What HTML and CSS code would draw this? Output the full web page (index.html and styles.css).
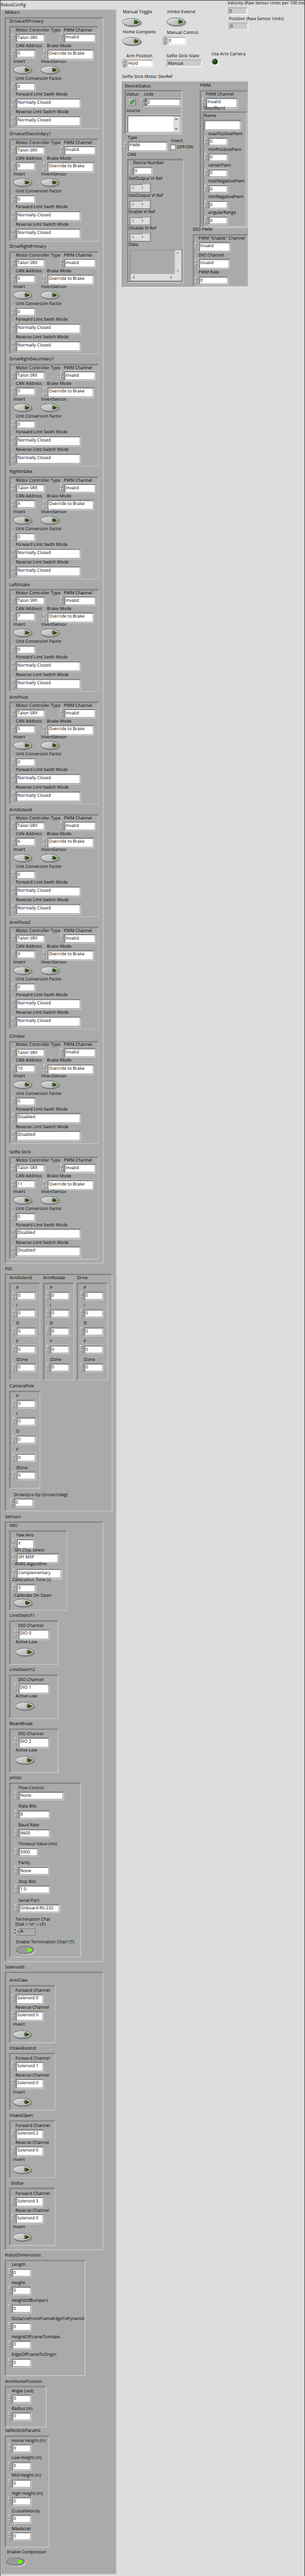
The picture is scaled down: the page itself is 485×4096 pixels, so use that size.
FILE: index.html
```
<!DOCTYPE html>
<html lang="en">
<head>
<meta charset="utf-8">
<title>RobotConfig</title>
<link rel="stylesheet" href="styles.css">
</head>
<body>
<svg class="defs" aria-hidden="true">
  <defs>
    <linearGradient id="metal" x1="0" y1="0" x2="1" y2="1"><stop offset="0" stop-color="#f0f0f0"/><stop offset=".4" stop-color="#c4c4c4"/><stop offset="1" stop-color="#8c8c8c"/></linearGradient>
    <linearGradient id="face" x1="0" y1="0" x2="1" y2="1"><stop offset="0" stop-color="#e8e8e8"/><stop offset=".4" stop-color="#cacaca"/><stop offset="1" stop-color="#b0b0b0"/></linearGradient>
    <linearGradient id="dim" x1="0" y1="0" x2="1" y2="1"><stop offset="0" stop-color="#2f7a30"/><stop offset=".5" stop-color="#33611f"/><stop offset=".6" stop-color="#3d3500"/><stop offset="1" stop-color="#3d3500"/></linearGradient>
    <radialGradient id="lamp" cx=".35" cy=".35" r=".7"><stop offset="0" stop-color="#5c8c50"/><stop offset=".4" stop-color="#1f4a10"/><stop offset="1" stop-color="#1c2600"/></radialGradient>
  </defs>
</svg>
<main class="window"><div class="sheet" id="sheet"></div></main>
<script src="script.js"></script>
</body>
</html>
```
FILE: styles.css
```
* { box-sizing: border-box; }
body { margin: 0; background: #ddd; }
.defs { display: block; width: 0; height: 0; }
.window { width: 485px; height: 4096px; overflow: hidden; }
.sheet {
  --hi: #fff; --lo: #ccc; --deep: #aaa; --rim: #ddd;
  width: 813px; height: 6864px;
  transform: scale(.59656, .59674); transform-origin: 0 0;
  display: grid; grid-template-columns: 310px 1fr;
  background: #ddd; border: 1px solid #000; border-bottom-width: 0;
  font: 11.55px/18px "Open Sans", "Noto Sans", sans-serif;
  text-rendering: geometricPrecision;
  color: #000; white-space: nowrap;
}
.title { height: 23.5px; padding: 3.5px 0 0 1px; }
.panel {
  height: 6835.5px; padding-left: 11px; background: #aaa;
  box-shadow: inset 1.5px 1.5px #ccc, inset -2px -2px #ccc, 1px 1px #fff;
}
.panel, .dark { --hi: #ccc; --lo: #999; --deep: #777; --rim: #aaa; }

.stack { display: flex; flex-direction: column; align-items: flex-start; }
.row { display: flex; align-items: flex-start; }
.stack > *, .row > * { flex-shrink: 0; }
.caption { height: 20px; padding-left: 1.3px; }
.frame {
  background: #aaa;
  box-shadow: inset 2px 2px var(--lo), inset -2px -2px var(--hi), inset 4px 4px var(--deep);
}
.devref { box-shadow: inset 1.5px 1.5px #ccc, inset -2px -2px #fff, inset 3.5px 3.5px #999; }

.label { height: 18px; padding-left: 12px; }
.entry { display: flex; align-items: flex-start; }
.spin { display: block; flex: none; width: 12px; margin-top: -2px; }
.box {
  display: block; flex: none; height: 24px; padding-left: 5px; line-height: 23px; background: #fff;
  box-shadow: inset 2px 2px var(--lo), inset -1.7px -1.7px var(--hi), inset 4px 4px var(--deep), inset -3.7px -3.7px var(--rim);
}
.readout { background: #ccc; }
.toggle svg, .led svg, .status svg { display: block; }

.code { display: flex; padding: 0; }
.radix { width: 7.5px; margin: 2px 0 0 2px; padding-left: 2px; height: 18px; background: #777; color: #fff; line-height: 19px; font-size: 9px; }
.source { padding: 4px; display: flex; justify-content: flex-end; }
.source svg { background: #ddd; }
.status { padding-left: 7px; }
.check { width: 13px; height: 13px; border: 1px solid #333; background: #fff; }
.ref, .data { border: 1px solid #666; border-width: 0 1.5px 1.5px 0; box-shadow: inset 1px 1px #ccc, inset 2px 2px #aaa; background: #999; padding: 4px 0 0 6px; }
.ref svg, .data svg { display: block; }
.hex { width: 50px; height: 20px; margin-left: 1px; background: #aaa; display: flex; border: 1px solid #555; border-width: 0 1.5px 1.5px 0; box-shadow: inset 1px 1px #ccc; line-height: 19px; }
.hex b { font-weight: 400; width: 7px; padding-left: 2px; font-size: 9px; }
.hex span { flex: 1; margin: 1.5px; padding-left: 1px; border: 1px solid; border-color: #666 #ccc #ccc #666; line-height: 16px; }
```
FILE: script.js
```
// Element helpers. `mt` / `ml` are the spacing before an item.
const px = o => Object.entries(o).filter(([, v]) => v !== undefined)
  .map(([k, v]) => `${k}:${typeof v === 'number' ? v + 'px' : v}`).join(';');
const div = (cls, st, inner = '') => `<div class="${cls}" style="${px(st)}">${inner}</div>`;
const stack = (gap, items, o = {}) => div('stack', { gap, 'margin-top': o.mt, 'margin-left': o.ml, width: o.w }, items.join(''));
const row = (gap, items, o = {}) => div('row', { gap, height: o.h, 'margin-top': o.mt, 'margin-left': o.ml }, items.join(''));
const label = (text, lh, indent) => div('label', { height: lh, 'padding-left': indent }, text);

function spinner(h, split) {
  const paint = 'fill="url(#metal)" stroke="#808080" stroke-width=".7"';
  const s = split ? 13 : h / 2 - .5;
  const up = `<path d="M.5 ${s}V${s - 2}C.5 3 3 .5 6 .5S11.5 3 11.5 ${s - 2}V${s}Z" ${paint}/><path d="M3.8 ${s - 4}L6.7 ${s - 8}L8 ${s - 4}" fill="#eee" stroke="#555" stroke-width=".8"/>`;
  const t = h - s;
  const down = `<path d="M.5 ${t}V${t + 2}C.5 ${h - 3} 3 ${h - .5} 6 ${h - .5}S11.5 ${h - 3} 11.5 ${t + 2}V${t}Z" ${paint}/><path d="M3.5 ${t + 3.5}H8.5L6 ${t + 7.5}Z" fill="#ccc" stroke="#555" stroke-width=".9"/>`;
  return `<svg class="spin" height="${h}" viewBox="0 0 12 ${h}">${up}${down}</svg>`;
}

function field(text, value, w, o = {}) {
  const h = o.h || 24;
  const sh = h > 27 && !o.split ? 25 : h + 2;
  return div('field', { width: w + 12, 'margin-top': o.mt, 'margin-left': o.ml },
    label(text, o.lh, o.indent) +
    `<div class="entry">${o.bare ? '' : spinner(sh, o.split)}` +
    div('box ' + (o.cls || ''), { width: w, height: h }, value) + '</div>');
}

function toggle(text, o = {}) {
  const on = o.on;
  return div('toggle', { width: o.w, 'margin-top': o.mt, 'margin-left': o.ml },
    label(text, o.dy || 20.5, o.indent === undefined ? .7 : o.indent) +
    `<svg width="54" height="25" viewBox="0 0 54 25">
      <ellipse cx="27.5" cy="13.5" rx="25" ry="10.8" fill="${on ? '#d4d4d4' : '#868686'}" opacity=".8"/>
      <ellipse cx="24.5" cy="10.8" rx="24" ry="10.1" fill="${on ? '#777' : '#c4c4c4'}" stroke="#444" stroke-width="1.1"/>
      <ellipse cx="23.5" cy="10.3" rx="21.8" ry="8.6" fill="${on ? '#999' : 'url(#face)'}" ${on ? 'stroke="#bbb" stroke-width=".6"' : ''}/>
      <path d="M31 5.8H36L44 10.3V11.7L38 15.5H31Z" fill="${on ? '#6f0' : 'url(#dim)'}"/></svg>`);
}

const group = (caption, o, items) =>
  div('group', { 'margin-top': o.mt, 'margin-left': o.ml },
    div('caption', { height: o.cap, 'padding-left': o.ci }, caption) +
    div('frame stack ' + (o.cls || ''), { width: o.w, height: o.h, gap: o.gap, 'padding-top': o.pt, 'padding-left': o.pl }, items.join('')));

// Motors
const motor = (name, can, limit = 'Normally Closed', mt) => group(name, { w: 240, h: 275, pt: 2, pl: 6, mt }, [
  row(38.5, [field('Motor Controller Type', 'Talon SRX', 77.5), field('PWM Channel', 'Invalid', 86, { h: 26, lh: 17 })], { h: 42 }),
  row(18, [field('CAN Address', can, 53), field('Brake Mode', 'Override to Brake', 126, { h: 29, split: true })], { h: 42 }),
  row(0, [toggle('Invert', { w: 73 }), toggle('InvertSensor', { indent: 1.3 })], { h: 46, ml: 5 }),
  field('Unit Conversion Factor', '0', 53),
  field('Forward Limt Swith Mode', limit, 174, { h: 29, split: true }),
  field('Reverse Limt Switch Mode', limit, 174, { h: 29, split: true })
]);

// PID gains
const pid = name => group(name, { w: 84, h: 262.5, pt: 6, pl: 7, gap: 5.8 },
  ['P', 'I', 'D', 'F', 'IZone'].map(n => field(n, '0', 53)));

// Digital inputs and solenoids
const dio = (name, ch) => group(name, { w: 132, h: 119, pt: 7, pl: 12, mt: 5 }, [
  field('DIO Channel', ch, 84, { h: 28.5, lh: 17.5 }),
  toggle('Active Low', { mt: -2.6, ml: 5, dy: 24.5 })
]);
const solenoid = (name, n, ci) => group(name, { w: 124, h: 155, pt: 7.5, pl: 5, ci }, [
  field('Forward Channel', 'Solenoid ' + n, 75.5, { h: 28, lh: 17 }),
  field('Reverse Channel', 'Solenoid 0', 75.5, { h: 28, lh: 17 }),
  toggle('Invert', { ml: 5, dy: 24.3 })
]);
const numbers = names => names.map(n => field(n, '0', 53, { lh: 17.5 }));

const hex = `<svg width="6" height="20" viewBox="0 0 6 20"><path d="M0 0H6V20H0Z" fill="#ccc" stroke="#666" stroke-width=".6"/><path d="M.8 6L3 2.5L5.2 6ZM.8 13L3 16.5L5.2 13Z"/><path d="M0 10H6" stroke="#666"/></svg><div class="hex"><b>×</b><span>A</span></div>`;

const config = `<section><div class="title">RobotConfig</div><div class="panel">` + [
  group('Motors', { w: 264, h: 3322.5, pt: 4, pl: 12, gap: 5 }, [
    motor('DriveLeftPrimary', '0'), motor('DriveLeftSecondary1', '0'),
    motor('DriveRightPrimary', '0'), motor('DriveRightSecondary1', '0'),
    motor('RightIntake', '8'), motor('LeftIntake', '7'), motor('ArmPivot', '5'),
    motor('ArmExtend', '6'), motor('ArmPivot2', '9'),
    motor('Climber', '10', 'Disabled', 4), motor('Selfie Stick', '11', 'Disabled', 8)
  ]),
  group('PID', { w: 288, h: 634.5, pt: 4, pl: 12, mt: 5.5 }, [
    row(6, ['ArmExtend', 'ArmRotate', 'Drive'].map(pid)),
    row(0, [pid('CameraPole')], { mt: 5.5 }),
    field('DriveGyro Kp ((in/sec)/deg)', '0', 53, { mt: 6.5, ml: 1 })
  ]),
  group('Sensors', { w: 264, h: 1174.5, pt: 3.5, pl: 12, mt: 6 }, [
    group('IMU', { w: 156, h: 215, pt: 5, pl: 7 }, [
      field('Yaw Axis', 'X', 49, { h: 28, split: true }),
      field('SPI Chip Select', 'SPI MXP', 114, { h: 28, split: true, mt: -6, lh: 16, indent: 8.5 }),
      field('AHRS Algorithm', 'Complementary', 122, { h: 28.5, split: true, mt: -6.7, lh: 20, indent: 8.5 }),
      field('Calibration Time (s)', '3', 53, { mt: -6.8, lh: 19.7, indent: 1.5 }),
      toggle('Calibrate On Open', { mt: -1.5, ml: 5, dy: 17.5, indent: 1.5 })
    ]),
    dio('LimitSwitch1', 'DIO 0'), dio('LimitSwitch2', 'DIO 1'), dio('BeamBreak', 'DIO 2'),
    group('JeVois', { w: 192, h: 467, pt: 6.5, pl: 13, gap: 8, mt: 5 }, [
      field('Flow Control', 'None', 121), field('Data Bits', '8', 85),
      field('Baud Rate', '9600', 85), field('Timeout Value (ms)', '5000', 53),
      field('Parity', 'None', 83), field('Stop Bits', '1.0', 85),
      field('Serial Port', 'Onboard RS-232', 111, { lh: 17.5 }),
      div('', { 'line-height': '15px', 'margin-left': 3.5, 'margin-top': 1 }, `Termination Char<br>(0xA = '\\n' = LF)`),
      div('row', { 'margin-top': -7 }, hex),
      toggle('Enable Termination Char? (T)', { on: true, mt: 1, ml: 5, dy: 19.8, indent: 1.3 })
    ])
  ]),
  group('Solenoids', { w: 264, h: 743, pt: 16, pl: 12, gap: 5, mt: 5 }, [
    solenoid('ArmClaw', 0), solenoid('IntakeExtend', 1), solenoid('IntakeOpen', 2), solenoid('Shifter', 3, 4.3)
  ]),
  group('RobotDimensions', { w: 216, h: 310, pt: 5.5, pl: 7, gap: 6.6, mt: 5 },
    numbers(['Length', 'Height', 'HeightOfBumpers', 'DistanceFromFrameEdgeToPyramid', 'HeightOfFrameToIntake', 'EdgeOfFrameToOrigin'])),
  group('ArmHomePosition', { w: 112, h: 111, pt: 6, pl: 7, gap: 5.5, mt: 6 }, numbers(['Angle (rad)', 'Radius (in)'])),
  group('SelfieStickParams', { w: 120, h: 299, pt: 6, pl: 7, gap: 5.4, mt: 1 },
    numbers(['Home Height (in)', 'Low Height (in)', 'Mid Height (in)', 'High Height (in)', 'CruiseVelocity', 'MaxAccel'])),
  toggle('Enable Compressor', { on: true, mt: 3, ml: 5, dy: 24.7, indent: 1.3 })
].join('') + '</div></section>';

// Live status area
const status = row(0, [
  stack(0, [
    toggle('Manual Toggle', { mt: 23.3, ml: 1, dy: 23.5, indent: 1.3 }),
    toggle('Home Complete', { mt: 2.8, ml: 1, dy: 23.5, indent: 1.3 }),
    field('Arm Position', 'Hold', 72, { h: 22.5, mt: 15.7 })
  ], { w: 108 }),
  stack(0, [
    toggle('Inhibit Extend', { mt: 22.8, ml: 10.5, dy: 23.5, indent: 1.8 }),
    field('Manual Control', '0', 52, { h: 23.5, mt: 6.3 }),
    field('Selfie Stick State', 'Manual', 96, { h: 22.5, mt: 19.7, ml: 10, lh: 17.2, indent: .7, bare: true, cls: 'readout' })
  ], { w: 130.5 }),
  stack(0, [
    field('Velocity (Raw Sensor Units per 100 ms)', '0', 53, { h: 22, mt: -1, ml: 43.5, indent: 0, lh: 18, bare: true, cls: 'readout' }),
    field('Position (Raw Sensor Units)', '0', 53, { h: 22.5, mt: .8, ml: 45.5, indent: 1, bare: true, cls: 'readout' }),
    `<div class="led" style="margin-top:53.5px">Use Arm Camera<svg width="20" height="20" viewBox="0 0 20 20" style="margin-top:3px"><circle cx="11" cy="10.3" r="8" fill="#fff"/><circle cx="9" cy="8.3" r="8.2" fill="#b4b4b4"/><circle cx="9" cy="8.3" r="7.3" fill="url(#lamp)"/></svg></div>`
  ])
], { h: 193.5, ml: 14 });

const chevV = (h, w, a) => `<svg width="${w}" height="${h}" viewBox="0 0 ${w} ${h}"><path d="M${w / 2 - 3.5} ${a + 4}L${w / 2} ${a}L${w / 2 + 3.5} ${a + 4}M${w / 2 - 3.5} ${h - a - 4}L${w / 2} ${h - a}L${w / 2 + 3.5} ${h - a - 4}" fill="none" stroke="#555" stroke-width="1.8"/></svg>`;
const ref = (name, i) => div('', { 'margin-top': i ? -.5 : .6 }, label(name, 19, 1.3) +
  div('ref', { width: 60, height: 25.4 }, `<svg width="52" height="20" viewBox="0 0 52 20"><path d="M0 0H52V20H0Z" fill="#ddd"/><path d="M0 0H34V3H0Z" fill="#999"/><path d="M0 3.7H34V.5" fill="none" stroke="#fff"/><path d="M8.5 6L5 9.2L8.5 12.4M30 6L33.5 9.2L30 12.4" fill="none" stroke="#555" stroke-width="1.6"/></svg>`));

const devref = group('Selfie Stick Motor DevRef', { w: 340, h: 550, pt: 3, pl: 4, ml: 13, cap: 22, cls: 'dark devref' }, [
  row(0, [
    stack(0, [
      group('DeviceStatus', { w: 155, h: 119.5, pt: 4, pl: 5, mt: 1, ml: 3, cap: 18 }, [
        row(0, [
          div('', { width: 35.5 }, label('status', 19, .5) +
            '<div class="status"><svg width="19" height="19" viewBox="0 0 19 19"><path d="M0 0H19V19H0Z" fill="#666"/><path d="M0 0H17.5V17.5H0Z" fill="#ddd"/><path d="M1.5 1.5H17.5V17.5H1.5Z" fill="#b0b0b0"/><path d="M4.5 10L6 8.5L8 10L12 4H14V6L8.5 14.5H6.5L4.5 12Z" fill="#0f0" stroke="#000" stroke-width=".8"/></svg></div>'),
          field('code', '<span class="radix">d</span>0', 98.5, { h: 23, lh: 18.5, cls: 'code' })
        ], { h: 44 }),
        field('source', chevV(41, 16, 6), 144.5, { h: 48.7, lh: 19.5, indent: 0, ml: 1.5, bare: true, cls: 'source' })
      ]),
      row(0, [
        field('Type', 'PWM', 107, { h: 28.4, lh: 16.6 }),
        div('', { 'margin-top': 7, 'margin-left': 8 }, label('Invert', 20, 1) + '<div class="row" style="gap:3.5px;line-height:14px"><i class="check"></i>OFF/ON</div>')
      ], { mt: 1.2, h: 45 }),
      group('CAN', { w: 152, h: 331, pt: 3.4, pl: 4, mt: -1.6, ml: 10 }, [
        field('Device Number', '0', 53, { h: 22.7, lh: 18.5 }),
        ...['SetOutput VI Ref', 'GetOutput VI Ref', 'Enable VI Ref', 'Disable VI Ref'].map(ref),
        label('Data', 19.3, 1.3),
        div('data', { width: 144, height: 87 }, `<svg width="136" height="81" viewBox="0 0 136 81"><path d="M0 0H136V81H0Z" fill="#ddd"/><path d="M0 0H118V63H0Z" fill="#aaa" stroke="#777"/><path d="M0 63.5H118V0" fill="none" stroke="#fff"/><path d="M122.5 8.500L126 5L129.500 8.500M122.500 53L126 56.500L129.500 53M11 69L7 72.200L11 75.400M106 69L110 72.200L106 75.400" fill="none" stroke="#555" stroke-width="1.6"/></svg>`)
      ])
    ], { w: 185 }),
    stack(0, [
      group('PWM', { w: 129, h: 368, pt: 3.3, pl: 4, ml: 19 }, [
        field('PWM Channel', 'Invalid', 86, { h: 28.6, lh: 17.3 }),
        group('DeadBand', { w: 119.5, h: 309, pt: 3.5, pl: 4.5, mt: -9, ml: 2.5, cap: 16, ci: 5 }, [
          field('Name', '', 100, { h: 29.4, lh: 19.4, indent: 1.3, bare: true }),
          stack(.9, ['maxPositivePwm', 'minPositivePwm', 'centerPwm', 'maxNegativePwm', 'minNegativePwm', 'angularRange']
            .map(n => field(n, '0', 53, { h: 23 })), { mt: .4 })
        ])
      ]),
      group('DIO PWM', { w: 148, h: 141, pt: 3.4, pl: 4, mt: -5 }, [
        field('PWM "Enable" Channel', 'Invalid', 86, { h: 28 }),
        field('DIO Channel', 'Invalid', 84, { h: 28, lh: 17.4 }),
        field('PWM Rate', '0', 80, { h: 23, lh: 18.4 })
      ])
    ])
  ])
]);

document.getElementById('sheet').innerHTML = config + `<section>${status}${devref}</section>`;
```
